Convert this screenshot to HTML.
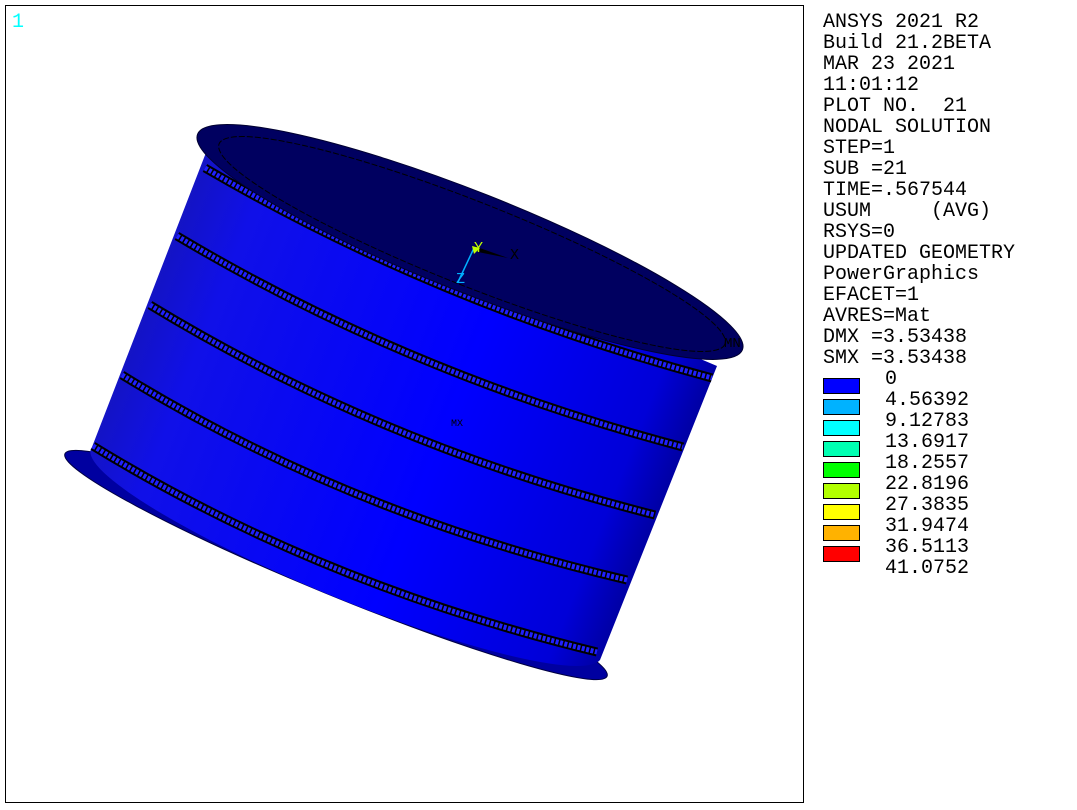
<!DOCTYPE html>
<html><head><meta charset="utf-8"><style>
html,body{margin:0;padding:0;background:#fff;width:1077px;height:810px;overflow:hidden}
svg{display:block}
text{font-family:"Liberation Mono",monospace;font-size:20px;fill:#000;white-space:pre}
</style></head><body>
<svg width="1077" height="810" viewBox="0 0 1077 810" xml:space="preserve">
<defs>
<linearGradient id="bg" gradientUnits="userSpaceOnUse" x1="140" y1="300" x2="700" y2="520">
<stop offset="0" stop-color="#1414c0"/>
<stop offset="0.12" stop-color="#1010e8"/>
<stop offset="0.55" stop-color="#0000ff"/>
<stop offset="0.85" stop-color="#0000d8"/>
<stop offset="1" stop-color="#000078"/>
</linearGradient>
</defs>
<rect x="5.5" y="5.5" width="798" height="797" fill="#fff" stroke="#000" stroke-width="1"/>
<text x="12" y="27" style="fill:#00ffff">1</text>

<ellipse cx="336" cy="565" rx="293" ry="30" transform="rotate(22.3 336 565)" fill="#0000a0" stroke="#000040" stroke-width="1"/>
<path d="M207,150 L92,447 A272 44 22.3 0 0 600,660 L717,366 Z" fill="url(#bg)"/>
<g fill="none">
<path d="M205,168 Q440,305 712,378" stroke="#000" stroke-width="9"/>
<path d="M205,168 Q440,305 712,378" stroke="#2020ff" stroke-width="5" stroke-dasharray="3 1.5"/>
<path d="M177,236 Q410,375 683,447" stroke="#000" stroke-width="9"/>
<path d="M177,236 Q410,375 683,447" stroke="#2020ff" stroke-width="5" stroke-dasharray="3 1.5"/>
<path d="M150,305 Q380,445 655,515" stroke="#000" stroke-width="9"/>
<path d="M150,305 Q380,445 655,515" stroke="#2020ff" stroke-width="5" stroke-dasharray="3 1.5"/>
<path d="M122,375 Q350,515 627,580" stroke="#000" stroke-width="9"/>
<path d="M122,375 Q350,515 627,580" stroke="#2020ff" stroke-width="5" stroke-dasharray="3 1.5"/>
<path d="M93,446 Q320,585 597,652" stroke="#000" stroke-width="9"/>
<path d="M93,446 Q320,585 597,652" stroke="#2020ff" stroke-width="5" stroke-dasharray="3 1.5"/>
</g>
<ellipse cx="470" cy="242" rx="293" ry="50" transform="rotate(21.6 470 242)" fill="#000060" stroke="#000030" stroke-width="1"/>
<ellipse cx="472" cy="244" rx="272" ry="42" transform="rotate(21.6 472 244)" fill="none" stroke="#000" stroke-width="1" stroke-dasharray="6 2"/>
<line x1="474" y1="248" x2="458" y2="282" stroke="#00b0ff" stroke-width="1.5"/>
<polygon points="474,246 508,258 478,252" fill="#000"/>
<polygon points="472,246 480,248 474,254" fill="#c0ff00"/>
<text x="474" y="252" style="fill:#c0ff00;font-size:15px">Y</text>
<text x="510" y="259" style="font-size:15px">X</text>
<text x="456" y="283" style="fill:#00b0ff;font-size:15px">Z</text>
<text x="724" y="347" style="font-size:14px">MN</text>
<text x="451" y="426" style="font-size:10px">MX</text>

<g>
<text x="823" y="27">ANSYS 2021 R2</text>
<text x="823" y="48">Build 21.2BETA</text>
<text x="823" y="69">MAR 23 2021</text>
<text x="823" y="90">11:01:12</text>
<text x="823" y="111">PLOT NO.  21</text>
<text x="823" y="132">NODAL SOLUTION</text>
<text x="823" y="153">STEP=1</text>
<text x="823" y="174">SUB =21</text>
<text x="823" y="195">TIME=.567544</text>
<text x="823" y="216">USUM     (AVG)</text>
<text x="823" y="237">RSYS=0</text>
<text x="823" y="258">UPDATED GEOMETRY</text>
<text x="823" y="279">PowerGraphics</text>
<text x="823" y="300">EFACET=1</text>
<text x="823" y="321">AVRES=Mat</text>
<text x="823" y="342">DMX =3.53438</text>
<text x="823" y="363">SMX =3.53438</text>
</g>
<g stroke="#000" stroke-width="1">
<rect x="823.5" y="378.5" width="36" height="15" fill="#0000ff"/>
<rect x="823.5" y="399.5" width="36" height="15" fill="#00b2ff"/>
<rect x="823.5" y="420.5" width="36" height="15" fill="#00ffff"/>
<rect x="823.5" y="441.5" width="36" height="15" fill="#00ffb2"/>
<rect x="823.5" y="462.5" width="36" height="15" fill="#00ff00"/>
<rect x="823.5" y="483.5" width="36" height="15" fill="#b2ff00"/>
<rect x="823.5" y="504.5" width="36" height="15" fill="#ffff00"/>
<rect x="823.5" y="525.5" width="36" height="15" fill="#ffb200"/>
<rect x="823.5" y="546.5" width="36" height="15" fill="#ff0000"/>
</g>
<g>
<text x="885" y="384">0</text>
<text x="885" y="405">4.56392</text>
<text x="885" y="426">9.12783</text>
<text x="885" y="447">13.6917</text>
<text x="885" y="468">18.2557</text>
<text x="885" y="489">22.8196</text>
<text x="885" y="510">27.3835</text>
<text x="885" y="531">31.9474</text>
<text x="885" y="552">36.5113</text>
<text x="885" y="573">41.0752</text>
</g>
</svg>
</body></html>
